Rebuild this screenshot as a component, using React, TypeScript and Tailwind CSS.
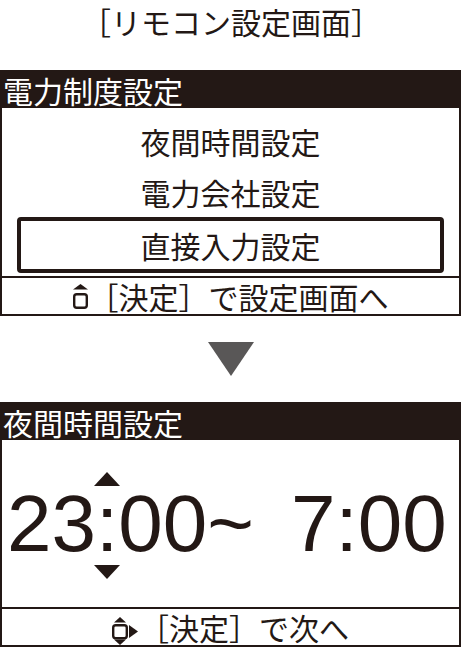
const ink = 'text-[#231815]'
const jp = { fontFamily: '"Noto Sans CJK JP", "Noto Sans", sans-serif' }

function UpKeyIcon() {
  return (
    <svg width="15" height="25" viewBox="0 0 15 25" className="mr-[1px]">
      <polygon points="0,5.5 7.5,0 15,5.5" fill="#231815" />
      <rect x="1.2" y="10.2" width="12.6" height="13.6" rx="2.5" fill="none" stroke="#231815" strokeWidth="2.4" />
    </svg>
  )
}

function CrossKeyIcon() {
  return (
    <svg width="27" height="28" viewBox="0 0 27 28" className="self-end">
      <polygon points="2,5.5 8,0 14,5.5" fill="#231815" />
      <rect x="1.2" y="8.2" width="13.6" height="13" rx="2.5" fill="none" stroke="#231815" strokeWidth="2.4" />
      <polygon points="2,22.5 8,28 14,22.5" fill="#231815" />
      <polygon points="17,8 26,14.5 17,21" fill="#231815" />
    </svg>
  )
}

function Panel({ title, body, bodyH, footer }: { title: string; body: React.ReactNode; bodyH: string; footer: React.ReactNode }) {
  return (
    <div className="w-[461px] border-2 border-[#231815] bg-white">
      <div className="h-[36px] bg-[#231815] pl-[1px] flex items-center text-white text-[30px] leading-none" style={jp}>
        {title}
      </div>
      <div className={bodyH}>{body}</div>
      <div className="h-[38px] border-t-2 border-[#231815] flex items-center justify-center">{footer}</div>
    </div>
  )
}

export default function App() {
  const menu = (
    <div className={`flex flex-col pt-[7px] px-[15px] text-[30px] leading-none ${ink}`} style={jp}>
      <div className="h-[52px] flex items-center justify-center">夜間時間設定</div>
      <div className="h-[50px] flex items-center justify-center">電力会社設定</div>
      <div className="h-[56px] flex items-center justify-center border-4 border-[#231815] rounded-[4px]">直接入力設定</div>
    </div>
  )

  const time = (
    <div
      className={`h-full flex items-center pl-[5px] text-[80px] leading-none ${ink}`}
      style={{ fontFamily: '"Liberation Sans", Arial, sans-serif' }}
    >
      <span>23</span>
      <span className="relative">
        :
        <span className="absolute left-[-2px] top-[-12px] w-0 h-0 border-l-[13.5px] border-r-[13.5px] border-b-[14px] border-l-transparent border-r-transparent border-b-[#231815]" />
        <span className="absolute left-[-2px] bottom-[-15px] w-0 h-0 border-l-[13.5px] border-r-[13.5px] border-t-[14px] border-l-transparent border-r-transparent border-t-[#231815]" />
      </span>
      <span>00~</span>
      <span className="ml-[37px]">7:00</span>
    </div>
  )

  return (
    <div className="w-[462px] h-[649px] bg-white flex flex-col">
      <div className={`h-[70px] text-center text-[30px] leading-[43px] ${ink}`} style={jp}>
        ［リモコン設定画面］
      </div>

      <Panel
        title="電力制度設定"
        bodyH="h-[168px]"
        body={menu}
        footer={
          <div className={`flex items-center text-[30px] leading-none ${ink}`} style={jp}>
            <UpKeyIcon />
            <span>［決定］で設定画面へ</span>
          </div>
        }
      />

      <div className="h-[86px] flex items-center justify-center">
        <div className="w-0 h-0 border-l-[23.5px] border-r-[23.5px] border-t-[34px] border-l-transparent border-r-transparent border-t-[#595757]" />
      </div>

      <Panel
        title="夜間時間設定"
        bodyH="h-[167px]"
        body={time}
        footer={
          <div className={`h-full flex items-center text-[30px] leading-none ${ink}`} style={jp}>
            <CrossKeyIcon />
            <span>［決定］で次へ</span>
          </div>
        }
      />
    </div>
  )
}
